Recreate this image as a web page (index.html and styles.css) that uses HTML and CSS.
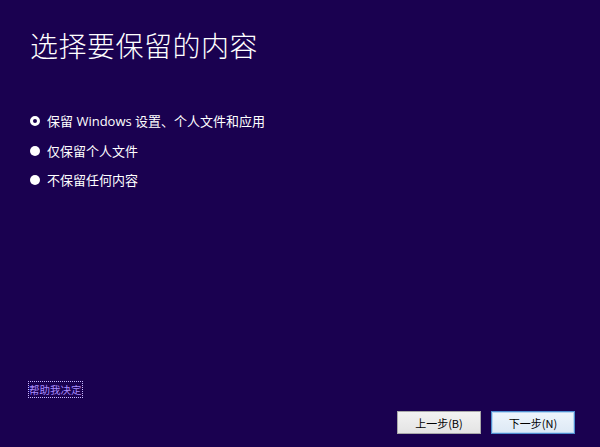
FILE: index.html
```html
<!DOCTYPE html>
<html lang="zh-CN">
<head>
<meta charset="utf-8">
<link rel="stylesheet" href="styles.css">
</head>
<body>
<div class="page">
  <h1 class="title">选择要保留的内容</h1>
  <div class="options">
    <label class="opt"><span class="radio checked"></span><span>保留 Windows 设置、个人文件和应用</span></label>
    <label class="opt"><span class="radio"></span><span>仅保留个人文件</span></label>
    <label class="opt"><span class="radio"></span><span>不保留任何内容</span></label>
  </div>
  <div class="spacer"></div>
  <div class="help"><a class="link" href="#">帮助我决定</a></div>
  <div class="buttons">
    <button class="btn">上一步(B)</button>
    <button class="btn primary">下一步(N)</button>
  </div>
</div>
</body>
</html>
```
FILE: styles.css
```css
html, body {
  margin: 0;
  padding: 0;
  width: 600px;
  height: 447px;
  background: #1a0150;
  overflow: hidden;
}
.page {
  box-sizing: border-box;
  width: 600px;
  height: 447px;
  display: flex;
  flex-direction: column;
  padding: 29px 25px 13px 30px;
  font-family: "Noto Sans CJK SC", "Microsoft YaHei", sans-serif;
  color: #ffffff;
}
.title {
  margin: 0;
  font-size: 28px;
  font-weight: 300;
  line-height: 32px;
  letter-spacing: 0.5px;
}
.options {
  margin-top: 50px;
  display: flex;
  flex-direction: column;
  gap: 9.5px;
}
.opt {
  display: flex;
  align-items: center;
  gap: 7px;
  font-family: "Open Sans", "Noto Sans CJK SC", sans-serif;
  font-size: 13px;
  line-height: 20px;
  height: 20px;
}
.radio {
  box-sizing: border-box;
  width: 10px;
  height: 10px;
  border-radius: 50%;
  background: #ffffff;
  flex: none;
}
.radio.checked {
  background: #1a0150;
  border: 3px solid #ffffff;
}
.spacer { flex: 1; }
.help {
  display: flex;
  margin-left: -1px;
  margin-top: -3px;
}
.link {
  font-size: 10.5px;
  line-height: 15px;
  color: #a98bff;
  text-decoration: none;
  outline: 1px dotted #c8b8ff;
  outline-offset: 0;
  padding: 0;
}
.buttons {
  margin-top: 14px;
  display: flex;
  justify-content: flex-end;
  gap: 10px;
}
.btn {
  box-sizing: border-box;
  width: 84px;
  height: 23px;
  font-family: "Noto Sans CJK SC", sans-serif;
  font-size: 11px;
  color: #000;
  background: linear-gradient(#f2f2f2, #e4e4e4);
  border: 1px solid #a9a9a9;
  border-radius: 0;
  padding: 0;
}
.btn.primary {
  background: linear-gradient(#eef5fc, #dde9f5);
  border: 1px solid #4f8fd0;
  box-shadow: inset 0 0 0 1px #b8d6f2;
}
```
